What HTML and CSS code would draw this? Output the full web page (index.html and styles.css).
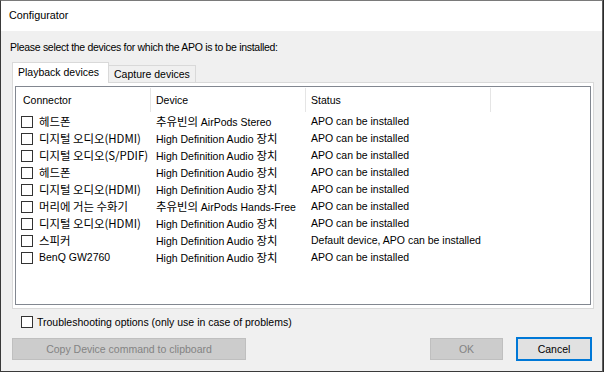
FILE: index.html
```html
<!DOCTYPE html>
<html lang="en">

<head>
    <meta charset="UTF-8">
    <meta name="viewport" content="width=device-width, initial-scale=1.0">
    <title>Configurator</title>
    <link rel="stylesheet" href="styles.css">
</head>

<body>
    <div class="window">
        <div class="titlebar">Configurator</div>
        <div class="content">
            <p class="prompt">Please select the devices for which the APO is to be installed:</p>

            <div class="tabs">
                <div class="tab active">Playback devices</div>
                <div class="tab">Capture devices</div>
            </div>

            <div class="panel">
                <div class="list">
                    <div class="row head">
                        <div class="cell first">Connector</div>
                        <div class="cell">Device</div>
                        <div class="cell">Status</div>
                        <div class="cell last"></div>
                    </div>
                    <div class="row">
                        <div class="cell conn"><span class="box"></span><span class="ko">헤드폰</span></div>
                        <div class="cell"><span class="ko">추유빈의</span> AirPods Stereo</div>
                        <div class="cell">APO can be installed</div>
                    </div>
                    <div class="row">
                        <div class="cell conn"><span class="box"></span><span class="ko">디지털 오디오(HDMI)</span></div>
                        <div class="cell">High Definition Audio <span class="ko">장치</span></div>
                        <div class="cell">APO can be installed</div>
                    </div>
                    <div class="row">
                        <div class="cell conn"><span class="box"></span><span class="ko">디지털 오디오(S/PDIF)</span></div>
                        <div class="cell">High Definition Audio <span class="ko">장치</span></div>
                        <div class="cell">APO can be installed</div>
                    </div>
                    <div class="row">
                        <div class="cell conn"><span class="box"></span><span class="ko">헤드폰</span></div>
                        <div class="cell">High Definition Audio <span class="ko">장치</span></div>
                        <div class="cell">APO can be installed</div>
                    </div>
                    <div class="row">
                        <div class="cell conn"><span class="box"></span><span class="ko">디지털 오디오(HDMI)</span></div>
                        <div class="cell">High Definition Audio <span class="ko">장치</span></div>
                        <div class="cell">APO can be installed</div>
                    </div>
                    <div class="row">
                        <div class="cell conn"><span class="box"></span><span class="ko">머리에 거는 수화기</span></div>
                        <div class="cell"><span class="ko">추유빈의</span> AirPods Hands-Free</div>
                        <div class="cell">APO can be installed</div>
                    </div>
                    <div class="row">
                        <div class="cell conn"><span class="box"></span><span class="ko">디지털 오디오(HDMI)</span></div>
                        <div class="cell">High Definition Audio <span class="ko">장치</span></div>
                        <div class="cell">APO can be installed</div>
                    </div>
                    <div class="row">
                        <div class="cell conn"><span class="box"></span><span class="ko">스피커</span></div>
                        <div class="cell">High Definition Audio <span class="ko">장치</span></div>
                        <div class="cell">Default device, APO can be installed</div>
                    </div>
                    <div class="row">
                        <div class="cell conn"><span class="box"></span>BenQ GW2760</div>
                        <div class="cell">High Definition Audio <span class="ko">장치</span></div>
                        <div class="cell">APO can be installed</div>
                    </div>
                </div>
            </div>

            <label class="trouble"><span class="box"></span>Troubleshooting options (only use in case of problems)</label>

            <div class="buttons">
                <button class="btn copy" disabled>Copy Device command to clipboard</button>
                <span class="spacer"></span>
                <button class="btn ok" disabled>OK</button>
                <button class="btn cancel">Cancel</button>
            </div>
        </div>
    </div>
</body>

</html>
```

FILE: styles.css
```css
* {
    margin: 0;
    padding: 0;
    box-sizing: border-box;
}

body {
    background-color: #2b2b2b;
    font-family: "Liberation Sans", "Noto Sans CJK KR", sans-serif;
    font-size: 10.5px;
    color: #000;
}

.window {
    width: 603px;
    height: 372px;
    border-top: 1px solid #7a7a7a;
    border-left: 1px solid #3a3a3a;
    border-right: 1px solid #5e5e5e;
    border-bottom: 1px solid #3a3a3a;
    background-color: #f0f0f0;
    display: flex;
    flex-direction: column;
}

.titlebar {
    height: 30px;
    line-height: 29px;
    padding-left: 8px;
    background-color: #fff;
    font-size: 10.8px;
}

.content {
    flex: 1;
    display: flex;
    flex-direction: column;
}

.prompt {
    margin-top: 9px;
    margin-left: 9px;
    line-height: 14px;
    letter-spacing: -0.3px;
}

/* tab strip */
.tabs {
    display: flex;
    align-items: flex-end;
    margin-top: 8px;
    margin-left: 11px;
    margin-right: 8px;
    height: 21px;
    border-bottom: 1px solid #d9d9d9;
}

.tab {
    height: 17px;
    line-height: 16px;
    padding: 0 5px;
    border: 1px solid #d9d9d9;
    border-bottom: none;
    background-color: #f0f0f0;
    margin-left: -1px;
}

.tab.active {
    height: 21px;
    line-height: 19px;
    margin-left: 0;
    margin-bottom: -1px;
    background-color: #fff;
    padding: 0 6px 0 5px;
    width: 97px;
}

.panel {
    margin-left: 11px;
    margin-right: 8px;
    height: 226px;
    padding: 3px 2px 3px 2px;
    border: 1px solid #d9d9d9;
    border-top: none;
    background-color: #fff;
}

.list {
    height: 219px;
    border: 1px solid #828790;
    background-color: #fff;
}

.row {
    display: grid;
    grid-template-columns: 135px 155px 185px 1fr;
    height: 17px;
    line-height: 17px;
    white-space: nowrap;
}

.row.head {
    height: 26px;
    line-height: 25px;
}

.head .cell {
    border-right: 1px solid #e5e5e5;
    height: 24px;
    margin-top: 1px;
    line-height: 24px;
}

.head .cell.first {
    padding-left: 7px;
}

.head .cell.last {
    border-right: none;
}

.cell {
    padding-left: 5px;
    overflow: hidden;
}

.cell.conn {
    display: flex;
    align-items: center;
}

.ko {
    font-family: "Noto Sans CJK KR", sans-serif;
    font-size: 11.4px;
    line-height: 17px;
}

.box {
    display: inline-block;
    width: 12px;
    height: 12px;
    border: 1px solid #333;
    background-color: #fff;
    margin-right: 6px;
    flex-shrink: 0;
}

.trouble {
    display: flex;
    align-items: center;
    margin-top: 6px;
    margin-left: 20px;
    height: 14px;
}

.trouble .box {
    margin-right: 4px;
}

/* bottom buttons */
.buttons {
    display: flex;
    margin-top: 9px;
    margin-left: 11px;
    margin-right: 10px;
}

.spacer {
    flex: 1;
}

.btn {
    font-family: "Liberation Sans", sans-serif;
    font-size: 10.5px;
    height: 22px;
    border: 1px solid #bfbfbf;
    background-color: #cccccc;
    color: #838383;
}

.copy {
    width: 234px;
}

.ok {
    width: 73px;
    margin-right: 13px;
}

.cancel {
    width: 76px;
    color: #000;
    background-color: #e1e1e1;
    border: 2px solid #0078d7;
    height: 24px;
    margin-top: -1px;
}
```
